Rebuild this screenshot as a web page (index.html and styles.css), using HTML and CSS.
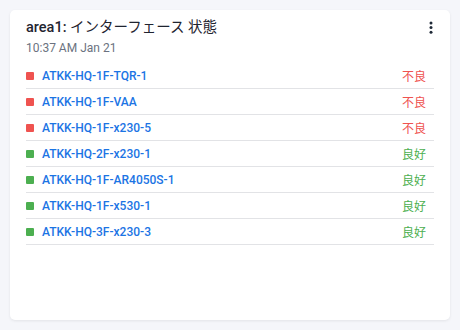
FILE: index.html
```html
<!DOCTYPE html>
<html lang="ja">
<head>
  <meta charset="UTF-8">
  <meta name="viewport" content="width=device-width, initial-scale=1.0">
  <title>area1: インターフェース 状態</title>
  <link rel="stylesheet" href="styles.css">
</head>
<body>
  <div class="card">
    <div class="card-header">
      <div>
        <div class="card-title"><strong>area1:</strong> インターフェース 状態</div>
        <div class="card-sub">10:37 AM Jan 21</div>
      </div>
      <button class="menu-btn" aria-label="menu">
        <svg width="4" height="14" viewBox="0 0 4 14">
          <circle cx="2" cy="2" r="1.5" fill="#1f2937"/>
          <circle cx="2" cy="6.6" r="1.5" fill="#1f2937"/>
          <circle cx="2" cy="11.3" r="1.5" fill="#1f2937"/>
        </svg>
      </button>
    </div>

    <ul class="if-list">
      <li class="if-row bad"><span class="dot"></span><a href="#">ATKK-HQ-1F-TQR-1</a><span class="status">不良</span></li>
      <li class="if-row bad"><span class="dot"></span><a href="#">ATKK-HQ-1F-VAA</a><span class="status">不良</span></li>
      <li class="if-row bad"><span class="dot"></span><a href="#">ATKK-HQ-1F-x230-5</a><span class="status">不良</span></li>
      <li class="if-row good"><span class="dot"></span><a href="#">ATKK-HQ-2F-x230-1</a><span class="status">良好</span></li>
      <li class="if-row good"><span class="dot"></span><a href="#">ATKK-HQ-1F-AR4050S-1</a><span class="status">良好</span></li>
      <li class="if-row good"><span class="dot"></span><a href="#">ATKK-HQ-1F-x530-1</a><span class="status">良好</span></li>
      <li class="if-row good"><span class="dot"></span><a href="#">ATKK-HQ-3F-x230-3</a><span class="status">良好</span></li>
    </ul>
  </div>
</body>
</html>
```

FILE: styles.css
```css
body {
  font-family: Roboto, "Noto Sans CJK JP", sans-serif;
  margin: 0;
  padding: 10px;
  background-color: #f5f6fa;
}
.card {
  background: white;
  height: 310px;
  box-sizing: border-box;
  padding: 8px 16px 16px;
  border-radius: 5px;
  box-shadow: 0 1px 3px rgba(0,0,0,0.08);
}
.card-header {
  display: flex;
  justify-content: space-between;
  align-items: flex-start;
}
.card-title {
  font-size: 14.5px;
  line-height: 18px;
  padding-top: 1px;
  color: #1f2430;
}
.card-title strong {
  font-weight: 500;
}
.card-sub {
  font-size: 12px;
  line-height: 16px;
  margin-top: 3px;
  color: #6b7280;
}
.menu-btn {
  background: none;
  border: none;
  padding: 0;
  margin: 3px 1px 0 0;
  cursor: pointer;
  display: flex;
}
.if-list {
  list-style: none;
  margin: 7px 0 0;
  padding: 0;
}
.if-row {
  display: flex;
  align-items: center;
  height: 25px;
  border-bottom: 1px solid #e2e3e6;
  font-size: 12px;
}
.dot {
  width: 8px;
  height: 8px;
  border-radius: 1px;
  margin-right: 8px;
}
.if-row a {
  flex: 1;
  color: #1b74e4;
  font-weight: 500;
  text-decoration: none;
}
.status {
  margin-right: 8px;
}
.bad .dot {
  background-color: #ef5350;
}
.bad .status {
  color: #ef5350;
}
.good .dot {
  background-color: #4caf50;
}
.good .status {
  color: #4caf50;
}
```
